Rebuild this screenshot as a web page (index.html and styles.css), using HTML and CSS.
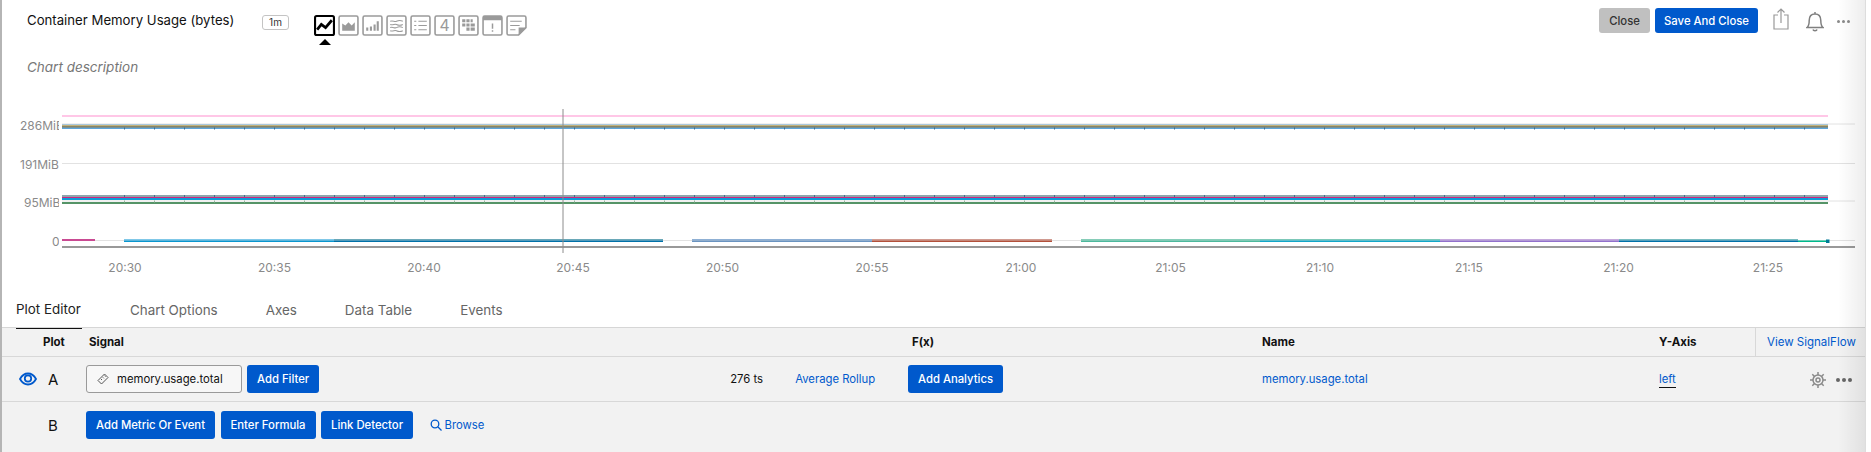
FILE: index.html
```html
<!DOCTYPE html>
<html lang="en">
<head>
    <meta charset="UTF-8">
    <meta name="viewport" content="width=device-width, initial-scale=1.0">
    <title>Container Memory Usage (bytes)</title>
    <link rel="stylesheet" href="styles.css">
</head>
<body>
    <div class="app">
        <!-- top bar -->
        <div class="topbar">
            <h1 class="chart-title">Container Memory Usage (bytes)</h1>
            <span class="resolution">1m</span>
            <div class="viz-icons">
                <span class="viz active">
                    <svg viewBox="0 0 20 20"><rect x="1" y="1" width="18" height="18" rx="1.5"/><polyline points="3,14 7,9 11,12 17,5"/></svg>
                </span>
                <span class="viz">
                    <svg viewBox="0 0 20 20"><rect x="1" y="1" width="18" height="18" rx="1.5"/><path class="fill" d="M4 15V8l3 2 3-3 3 3 3-3v8z"/></svg>
                </span>
                <span class="viz">
                    <svg viewBox="0 0 20 20"><rect x="1" y="1" width="18" height="18" rx="1.5"/><path class="fill" d="M4 12h2v3H4zM7.500 11h2v4h-2zM11 9h2v6h-2zM14 6h2v9h-2z"/></svg>
                </span>
                <span class="viz">
                    <svg viewBox="0 0 20 20"><rect x="1" y="1" width="18" height="18" rx="1.5"/><path class="thin" d="M4 6c3-1 4 1 6 0s4-1 6 0M4 9c3 1 4-1 6 0s4 1 6 0M4 12c3-1 4 1 6 0s4-1 6 0M4 15c3 1 4-1 6 0s4 1 6 0"/></svg>
                </span>
                <span class="viz">
                    <svg viewBox="0 0 20 20"><rect x="1" y="1" width="18" height="18" rx="1.5"/><path class="thin" d="M4 6h2M8 6h8M4 10h2M8 10h8M4 14h2M8 14h8"/></svg>
                </span>
                <span class="viz">
                    <svg viewBox="0 0 20 20"><rect x="1" y="1" width="18" height="18" rx="1.5"/><text x="10" y="15.500" text-anchor="middle">4</text></svg>
                </span>
                <span class="viz">
                    <svg viewBox="0 0 20 20"><rect x="1" y="1" width="18" height="18" rx="1.5"/><path class="fill" d="M4 4h3v3H4zM8 4h3v3H8zM12 4h2v3h-2zM4 8h3v3H4zM8 8h3v3H8zM12 8h4v3h-4zM8 12h3v3H8zM12 12h4v3h-4z"/></svg>
                </span>
                <span class="viz">
                    <svg viewBox="0 0 20 20"><rect x="1" y="1" width="18" height="18" rx="1.5"/><path class="fill" d="M1 1h18v4H1zM9.300 8h1.400v5H9.300zM9.300 14.500h1.400V16H9.300z"/></svg>
                </span>
                <span class="viz">
                    <svg viewBox="0 0 20 20"><path d="M2.500 1h15A1.500 1.500 0 0 1 19 2.500V12l-7 7H2.500A1.500 1.500 0 0 1 1 17.500v-15A1.500 1.500 0 0 1 2.500 1z"/><path class="thin" d="M4 6h11M4 10h9M4 14h5"/><path class="fill" d="M12 19v-7h7z"/></svg>
                </span>
                <span class="caret"></span>
            </div>
            <div class="top-actions">
                <button class="btn btn-gray">Close</button>
                <button class="btn">Save And Close</button>
                <svg class="share-icon" viewBox="0 0 16 22"><path d="M5 7H1v14h14V7h-4M8 15V1M4.500 4.500 8 1l3.500 3.500"/></svg>
                <svg class="bell-icon" viewBox="0 0 18 21"><path d="M1 16.500c2-1.500 2.200-3.500 2.200-7C3.200 5.500 5.500 3 9 3s5.800 2.500 5.800 6.500c0 3.500.2 5.500 2.200 7zM9 1v2M7 18.500c.3 1.500 3.700 1.500 4 0"/></svg>
                <span class="dots"><i></i><i></i><i></i></span>
            </div>
        </div>

        <p class="chart-desc">Chart description</p>

        <!-- chart, coordinates in the svg are page pixels -->
        <svg class="chart" viewBox="2 100 1864 185">
            <defs>
                <clipPath id="ylabels"><rect x="0" y="100" width="59" height="160"/></clipPath>
            </defs>
            <g class="grid">
                <line x1="62" y1="124" x2="1855" y2="124"/>
                <line x1="62" y1="163.500" x2="1855" y2="163.500"/>
                <line x1="62" y1="201" x2="1855" y2="201"/>
                <line x1="62" y1="240.500" x2="1855" y2="240.500"/>
            </g>
            <g class="ylabels" clip-path="url(#ylabels)">
                <text x="20" y="130">286MiB</text>
                <text x="20" y="169">191MiB</text>
                <text x="24" y="207">95MiB</text>
                <text x="52" y="246">0</text>
            </g>

            <!-- upper series -->
            <line class="s" x1="62" y1="116" x2="1828" y2="116" stroke="#ff8fd0"/>
            <rect x="62" y="124" width="1766" height="5" fill="#a9c8dd"/>
            <line class="s" x1="62" y1="126" x2="1828" y2="126" stroke="#d99a1c"/>
            <line class="s" x1="62" y1="127" x2="1828" y2="127" stroke="#4a5a50"/>
            <line class="s" x1="62" y1="128.500" x2="1828" y2="128.500" stroke="#5ba6dc"/>
            <line class="notch" x1="124" y1="128.500" x2="1828" y2="128.500"/>

            <!-- middle series -->
            <rect x="62" y="195" width="1766" height="2" fill="#8fa5ad"/>
            <rect x="62" y="197" width="1766" height="1" fill="#d0247f"/>
            <rect x="62" y="198" width="1766" height="2" fill="#0d9bd8"/>
            <line class="notch" x1="124" y1="196" x2="1828" y2="196"/>
            <line class="s thick" x1="62" y1="203" x2="1828" y2="203" stroke="#1c7034"/>
            <line class="notch pale" x1="124" y1="201.500" x2="1828" y2="201.500"/>

            <!-- bottom series -->
            <g class="seg">
                <rect x="62" y="239" width="33" height="2" fill="#c94a92"/>
                <rect x="124" y="239" width="210" height="1.500" fill="#80c8e8"/>
                <rect x="334" y="239" width="329" height="1.500" fill="#6aa8b8"/>
                <rect x="692" y="239" width="180" height="1.500" fill="#8fb0d4"/>
                <rect x="872" y="239" width="180" height="1.500" fill="#d09a90"/>
                <rect x="1081" y="239" width="179" height="1.500" fill="#86cdb8"/>
                <rect x="1260" y="239" width="180" height="1.500" fill="#7cc8b8"/>
                <rect x="1440" y="239" width="179" height="1.500" fill="#c4a8dc"/>
                <rect x="1619" y="239" width="179" height="1.500" fill="#78bcc0"/>

                <rect x="124" y="240.500" width="210" height="1.500" fill="#0a96cf"/>
                <rect x="334" y="240.500" width="329" height="1.500" fill="#0070a8"/>
                <rect x="692" y="240.500" width="180" height="1.500" fill="#6a93c0"/>
                <rect x="872" y="240.500" width="180" height="1.500" fill="#b2503a"/>
                <rect x="1081" y="240.500" width="179" height="1.500" fill="#4cb89c"/>
                <rect x="1260" y="240.500" width="180" height="1.500" fill="#12a6c8"/>
                <rect x="1440" y="240.500" width="179" height="1.500" fill="#9170cc"/>
                <rect x="1619" y="240.500" width="179" height="1.500" fill="#0070a8"/>
                <rect x="1798" y="240.500" width="30" height="1.500" fill="#00b98c"/>
                <rect x="1826" y="239.500" width="3.500" height="3.500" fill="#007a96"/>
            </g>

            <line class="axis" x1="62" y1="247" x2="1855" y2="247"/>
            <line class="cursor" x1="563" y1="109" x2="563" y2="253"/>

            <g class="xlabels">
                <text x="125" y="272">20:30</text>
                <text x="274.500" y="272">20:35</text>
                <text x="424" y="272">20:40</text>
                <text x="573" y="272">20:45</text>
                <text x="722.500" y="272">20:50</text>
                <text x="872" y="272">20:55</text>
                <text x="1021" y="272">21:00</text>
                <text x="1170.500" y="272">21:05</text>
                <text x="1320" y="272">21:10</text>
                <text x="1469" y="272">21:15</text>
                <text x="1618.500" y="272">21:20</text>
                <text x="1768" y="272">21:25</text>
            </g>
        </svg>

        <!-- tabs -->
        <div class="tabs">
            <a class="tab active">Plot Editor</a>
            <a class="tab">Chart Options</a>
            <a class="tab">Axes</a>
            <a class="tab">Data Table</a>
            <a class="tab">Events</a>
        </div>

        <!-- plot table -->
        <div class="plots">
            <div class="row head">
                <div class="c-plot">Plot</div>
                <div class="c-signal">Signal</div>
                <div class="c-fx">F(x)</div>
                <div class="c-name">Name</div>
                <div class="c-axis">Y-Axis</div>
                <a class="signalflow">View SignalFlow</a>
            </div>
            <div class="row plot-a">
                <div class="c-plot">
                    <svg class="eye-icon" viewBox="0 0 18 14"><path d="M1 7c2-3.600 4.800-5.500 8-5.500S15 3.400 17 7c-2 3.600-4.800 5.500-8 5.500S3 10.600 1 7z"/><circle cx="9" cy="6.500" r="3.200"/></svg>
                    <span class="letter">A</span>
                </div>
                <div class="c-signal">
                    <div class="metric-box">
                        <svg class="tag-icon" viewBox="0 0 12 12"><path d="M1 7.500 7.500 1 11 4.500 4.500 11zM4 6l1 1M5.800 4.300l1 1M7.500 2.600l1 1"/></svg>
                        <span>memory.usage.total</span>
                    </div>
                    <button class="btn">Add Filter</button>
                    <span class="ts-count">276 ts</span>
                    <a class="link rollup">Average Rollup</a>
                </div>
                <div class="c-fx"><button class="btn">Add Analytics</button></div>
                <div class="c-name"><a class="link">memory.usage.total</a></div>
                <div class="c-axis"><a class="link axis-link">left</a></div>
                <div class="row-tools">
                    <svg class="gear-icon" viewBox="0 0 18 18"><circle cx="9" cy="9" r="5"/><circle cx="9" cy="9" r="2"/><path d="M9 1v3M9 14v3M1 9h3M14 9h3M3.300 3.300l2.200 2.200M12.500 12.500l2.200 2.200M3.300 14.700l2.200-2.200M12.500 5.500l2.200-2.200"/></svg>
                    <span class="dots dark"><i></i><i></i><i></i></span>
                </div>
            </div>
            <div class="row plot-b">
                <div class="c-plot"><span class="letter">B</span></div>
                <div class="b-actions">
                    <button class="btn btn-tall">Add Metric Or Event</button>
                    <button class="btn btn-tall">Enter Formula</button>
                    <button class="btn btn-tall">Link Detector</button>
                    <a class="link browse">
                        <svg class="search-icon" viewBox="0 0 12 12"><circle cx="5" cy="5" r="3.800"/><path d="M8 8l3.500 3.500"/></svg>
                        Browse
                    </a>
                </div>
            </div>
        </div>

        <div class="edge-fade"></div>
    </div>
</body>
</html>
```

FILE: styles.css
```css
* {
    box-sizing: border-box;
}

html, body {
    margin: 0;
    height: 100%;
    overflow: hidden;
    background-color: #ffffff;
}

body {
    font-family: Inter, "Liberation Sans", sans-serif;
    font-size: 11.300px;
    color: #111111;
}

.app {
    position: relative;
    width: 1866px;
    height: 452px;
    border-left: 2px solid #b5b5b5;
}

.topbar {
    display: flex;
    align-items: flex-start;
    height: 54px;
}

.chart-title {
    margin: 12px 0 0 25px;
    width: 235px;
    font-size: 13.200px;
    line-height: 17px;
    font-weight: 400;
}

.resolution {
    height: 15px;
    width: 27px;
    margin-top: 15px;
    border: 1px solid #c4c4c4;
    border-radius: 3px;
    font-size: 10px;
    line-height: 13px;
    text-align: center;
    color: #333333;
}

.viz-icons {
    position: relative;
    display: flex;
    gap: 3px;
    margin: 15px 0 0 25px;
}

.viz {
    width: 21px;
    height: 21px;
}

.viz svg {
    display: block;
    width: 21px;
    height: 21px;
    fill: none;
    stroke: #9a9a9a;
    stroke-width: 1.500;
}

.viz .fill {
    fill: #9a9a9a;
    stroke: none;
}

.viz .thin {
    stroke-width: 1;
}

.viz text {
    fill: #9a9a9a;
    stroke: none;
    font-size: 15px;
}

.viz.active svg {
    stroke: #000000;
    stroke-width: 2;
}

.viz.active polyline {
    stroke-width: 2.600;
}

.caret {
    position: absolute;
    left: 5px;
    top: 24px;
    border-left: 6px solid transparent;
    border-right: 6px solid transparent;
    border-bottom: 6px solid #000000;
}

.top-actions {
    display: flex;
    align-items: flex-start;
    margin-left: auto;
    margin-top: 8px;
    margin-right: 16px;
}

.btn {
    height: 25px;
    padding: 0 10px;
    margin: 0;
    border: none;
    border-radius: 3px;
    background-color: #0059cc;
    color: #ffffff;
    font-family: inherit;
    font-size: 11.300px;
    font-weight: 500;
    white-space: nowrap;
}

.top-actions .btn {
    padding: 0 9px;
}

.top-actions .btn-gray {
    width: 51px;
    padding: 0;
    margin-right: 5px;
    background-color: #c0c0c0;
    color: #333333;
}

.share-icon {
    width: 16px;
    height: 22px;
    margin-left: 15px;
    fill: none;
    stroke: #999999;
    stroke-width: 1.200;
}

.bell-icon {
    width: 18px;
    height: 21px;
    margin: 3px 0 0 17px;
    fill: none;
    stroke: #808080;
    stroke-width: 1.500;
}

.dots {
    display: inline-flex;
    gap: 2px;
    margin-left: 13px;
    margin-top: 12px;
}

.dots i {
    width: 3px;
    height: 3px;
    border-radius: 50%;
    background-color: #8a8a8a;
}

.dots.dark {
    margin: 0;
}

.dots.dark i {
    width: 4px;
    height: 4px;
    background-color: #666666;
}

.chart-desc {
    margin: 5px 0 0 25px;
    height: 41px;
    font-size: 13.500px;
    line-height: 16px;
    font-style: italic;
    color: #777777;
}

.chart {
    display: block;
    width: 1864px;
    height: 185px;
}

.grid line {
    stroke: #e2e2e2;
    stroke-width: 1;
}

.ylabels text {
    font-size: 12px;
    fill: #8a8a8a;
}

.s {
    stroke-width: 1.200;
}

.s.thick {
    stroke-width: 1.600;
}

.notch {
    stroke: #3f6f90;
    stroke-width: 2;
    stroke-dasharray: 1 29;
}

.notch.pale {
    stroke: #9ab8a0;
}

.axis {
    stroke: #777777;
    stroke-width: 1.500;
}

.cursor {
    stroke: #8c8c8c;
    stroke-width: 1;
}

.xlabels text {
    font-size: 12px;
    fill: #8a8a8a;
    text-anchor: middle;
}

.tabs {
    display: flex;
    height: 43px;
    padding-left: 14px;
    border-bottom: 1px solid #d6d6d6;
}

.tab {
    height: 43px;
    margin-right: 48px;
    padding-top: 17px;
    font-size: 13.400px;
    line-height: 16px;
    color: #666666;
}

.tab.active {
    height: 44px;
    width: 66px;
    color: #222222;
    padding-top: 16px;
    border-bottom: 1px solid #111111;
    white-space: nowrap;
}

.plots {
    background-color: #f2f2f2;
    height: 124px;
}

.row {
    display: grid;
    grid-template-columns: 84px 822px 354px 397px 96px 1fr;
    align-items: center;
    border-bottom: 1px solid #d8d8d8;
}

.head {
    height: 29px;
    grid-template-columns: 84px 826px 350px 397px 96px 1fr;
    font-weight: 700;
    font-size: 11.500px;
}

.head .c-plot {
    padding-left: 41px;
}

.head .c-signal {
    padding-left: 3px;
}

.signalflow {
    align-self: stretch;
    line-height: 28px;
    padding-left: 11px;
    border-left: 1px solid #d8d8d8;
    font-weight: 400;
    color: #0059cc;
}

.plot-a {
    height: 45px;
}

.c-plot {
    display: flex;
    align-items: center;
}

.eye-icon {
    width: 18px;
    height: 14px;
    margin-left: 17px;
    fill: none;
    stroke: #0059cc;
    stroke-width: 1.800;
}

.letter {
    font-size: 15px;
    color: #111111;
    margin-left: 11px;
}

.plot-b .letter {
    margin-left: 46px;
}

.c-signal {
    display: flex;
    align-items: center;
}

.metric-box {
    display: flex;
    align-items: center;
    width: 156px;
    height: 28px;
    margin-right: 5px;
    padding-left: 10px;
    border: 1px solid #9a9a9a;
    border-radius: 3px;
    background-color: #f7f7f7;
}

.tag-icon {
    width: 12px;
    height: 12px;
    margin-right: 8px;
    fill: none;
    stroke: #555555;
    stroke-width: 1;
}

.plot-a .btn {
    height: 28px;
}

.ts-count {
    margin-left: 411px;
    width: 65px;
}

.link {
    color: #0059cc;
}

.axis-link {
    color: #0059cc;
    padding-bottom: 1px;
    border-bottom: 1px solid #111111;
}

.c-name {
    min-width: 0;
}

.row-tools {
    display: flex;
    align-items: center;
    justify-content: flex-end;
    gap: 9px;
    padding: 2px 14px 0 0;
}

.gear-icon {
    width: 18px;
    height: 18px;
    fill: none;
    stroke: #8a8a8a;
    stroke-width: 1.500;
}

.plot-b {
    display: flex;
    height: 50px;
    border-bottom: none;
    padding-bottom: 4px;
}

.plot-b .c-plot {
    width: 84px;
}

.b-actions {
    display: flex;
    align-items: center;
    gap: 5.500px;
}

.btn-tall {
    height: 28px;
}

.browse {
    display: flex;
    align-items: center;
    gap: 3px;
    margin-left: 11px;
}

.search-icon {
    width: 12px;
    height: 12px;
    fill: none;
    stroke: #0059cc;
    stroke-width: 1.300;
}

/* soft shadow on the right side of the panel */
.edge-fade {
    position: absolute;
    top: 0;
    right: 0;
    bottom: 0;
    width: 28px;
    border-right: 1px solid #dddddd;
    background: linear-gradient(to right, rgba(0, 0, 0, 0), rgba(0, 0, 0, 0.07));
    pointer-events: none;
}
```
